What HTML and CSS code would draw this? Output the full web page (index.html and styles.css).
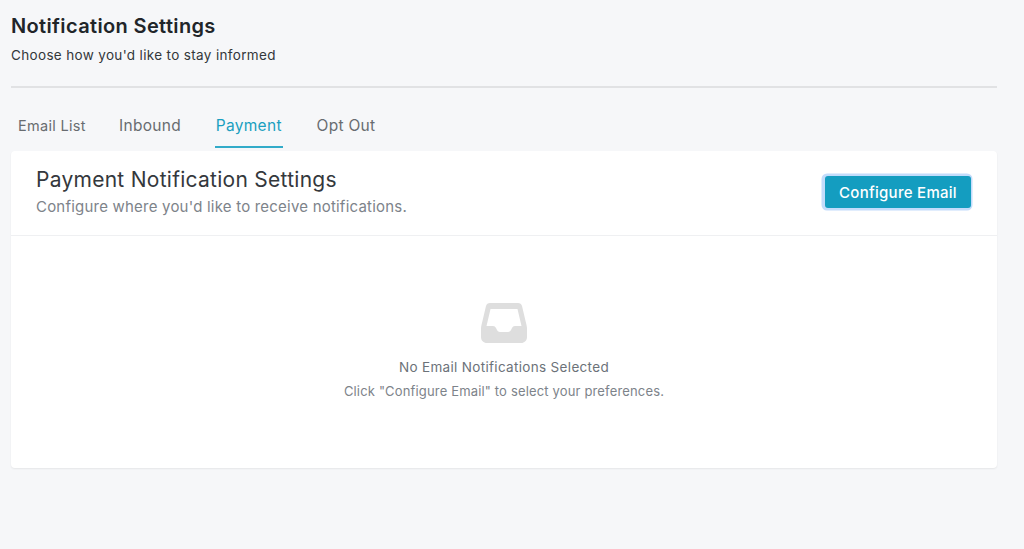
FILE: index.html
```html
<!DOCTYPE html>
<html lang="en">
<head>
<meta charset="utf-8">
<title>Notification Settings</title>
<link rel="stylesheet" href="styles.css">
</head>
<body>
<main class="page">
  <header class="page-head">
    <h1 class="page-title">Notification Settings</h1>
    <p class="page-sub">Choose how you'd like to stay informed</p>
  </header>
  <nav class="tabs">
    <a class="tab">Email List</a>
    <a class="tab tab-wide">Inbound</a>
    <a class="tab tab-wide tab-active">Payment</a>
    <a class="tab tab-wide">Opt Out</a>
  </nav>
  <section class="card">
    <div class="card-head">
      <div class="card-titles">
        <h2 class="card-title">Payment Notification Settings</h2>
        <p class="card-sub">Configure where you'd like to receive notifications.</p>
      </div>
      <button class="btn" type="button">Configure Email</button>
    </div>
    <div class="empty">
      <svg class="empty-icon" viewBox="0 0 46 40" width="46" height="40" aria-hidden="true">
        <path fill="#dedede" fill-rule="evenodd" d="M9 0H37C39 0 40.500 1 41 3L45.500 22C45.900 23.500 46 24.500 46 26V34C46 37.500 43.500 40 40 40H6C2.500 40 0 37.500 0 34V26C0 24.500 .1 23.500 .5 22L5 3C5.500 1 7 0 9 0ZM9.500 6 5.500 23H12C13.500 23 14.300 23.700 15 25L15.500 26C16.200 28 17.500 29 19 29H27C28.500 29 29.800 28 30.500 26L31 25C31.700 23.700 32.500 23 34 23H40.500L36.500 6Z"/>
      </svg>
      <p class="empty-title">No Email Notifications Selected</p>
      <p class="empty-sub">Click "Configure Email" to select your preferences.</p>
    </div>
  </section>
</main>
</body>
</html>
```
FILE: styles.css
```css
* { box-sizing: border-box; }
html, body { margin: 0; height: 100%; }
body {
  background: #f6f7f9;
  font-family: Inter, "Open Sans", "Liberation Sans", sans-serif;
  overflow: hidden;
}
.page { width: 997px; padding: 14px 0 0 11px; }
.page-head { height: 74px; border-bottom: 2px solid #e1e2e4; }
.page-title {
  margin: 0;
  font-size: 20px;
  line-height: 24px;
  font-weight: 600;
  letter-spacing: .36px;
  color: #212529;
}
.page-sub {
  margin: 6px 0 0;
  font-size: 13.500px;
  line-height: 22px;
  letter-spacing: .34px;
  color: #33373b;
}
.tabs {
  display: grid;
  grid-template-columns: 67px 62px 67.500px 57px;
  gap: 34px;
  padding: 23px 0 0 7px;
  height: 62px;
}
.tab {
  height: 37px;
  font-size: 14.500px;
  line-height: 30px;
  letter-spacing: .3px;
  text-align: center;
  white-space: nowrap;
  color: #686c70;
}
.tab-wide { font-size: 15.500px; }
.tab-active { color: #1a9fc0; border-bottom: 2px solid #32abc9; }
.card {
  height: 317px;
  background: #fff;
  border-radius: 4px;
  box-shadow: 0 1px 2px rgba(0, 0, 0, .07);
  margin-top: 1px;
}
.card-head {
  height: 85px;
  display: flex;
  justify-content: space-between;
  align-items: flex-start;
  padding: 0 26px 0 25px;
  border-bottom: 1px solid #eff0f2;
}
.card-titles { padding-top: 16px; }
.card-title {
  margin: 0;
  font-size: 21px;
  line-height: 26px;
  font-weight: 400;
  letter-spacing: .27px;
  color: #34383c;
}
.card-sub {
  margin: 3px 0 0;
  font-size: 15px;
  line-height: 22px;
  letter-spacing: .21px;
  color: #7d838a;
}
.btn {
  width: 146px;
  height: 32px;
  margin-top: 25px;
  border: 0;
  border-radius: 3px;
  background: #149dc0;
  color: #fff;
  font: 500 15px Inter, "Liberation Sans", sans-serif;
  letter-spacing: .28px;
  box-shadow: -1px 0 0 2.500px #c3dcfb;
}
.empty {
  display: flex;
  flex-direction: column;
  align-items: center;
  padding-top: 67px;
}
.empty-icon { display: block; }
.empty-title {
  margin: 14px 0 0;
  font-size: 13.500px;
  line-height: 20px;
  letter-spacing: .32px;
  color: #6c7279;
}
.empty-sub {
  margin: 4px 0 0;
  font-size: 13px;
  line-height: 20px;
  letter-spacing: .16px;
  color: #7d838a;
}
```
